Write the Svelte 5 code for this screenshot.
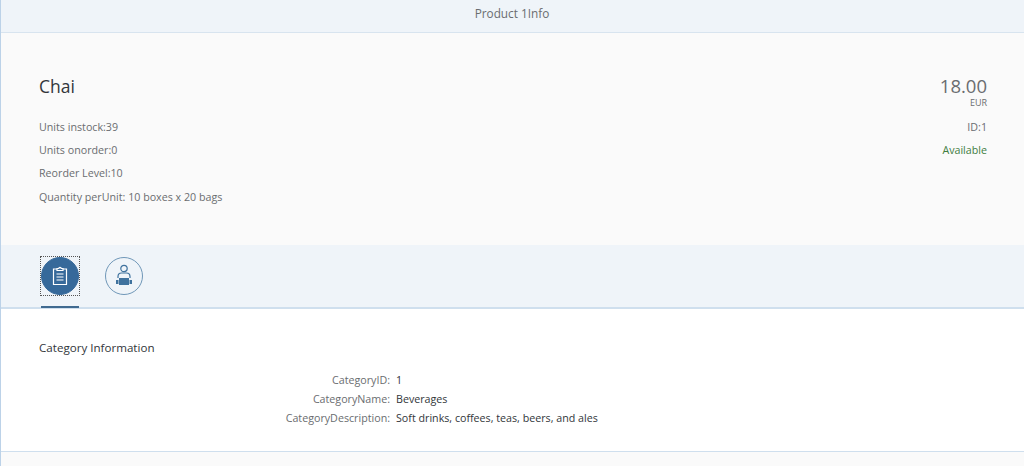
<script>
  const stats = ['Units instock:39', 'Units onorder:0', 'Reorder Level:10', 'Quantity perUnit: 10 boxes x 20 bags']
  const fields = [
    ['CategoryID:', '1'],
    ['CategoryName:', 'Beverages'],
    ['CategoryDescription:', 'Soft drinks, coffees, teas, beers, and ales']
  ]
</script>

<div class="page">
  <header class="title">Product 1Info</header>

  <section class="object">
    <div class="object__left">
      <h1>Chai</h1>
      {#each stats as s}
        <div class="attr">{s}</div>
      {/each}
    </div>
    <div class="object__right">
      <div class="price">18.00</div>
      <div class="unit">EUR</div>
      <div class="attr attr--id">ID:1</div>
      <div class="attr attr--ok">Available</div>
    </div>
  </section>

  <nav class="tabs">
    <div class="tab tab--active">
      <div class="focus">
        <span class="circle circle--filled">
          <svg width="16" height="20" viewBox="0 0 16 20" fill="none" stroke="#fff" stroke-width="1.2">
            <path d="M5 3H1.500v15.500h13V3H11" />
            <path d="M5 4.500V2.500h1.800a1.200 1.200 0 0 1 2.400 0H11v2z" />
            <path d="M4.500 8h7M4.500 11h7M4.500 14h7" />
          </svg>
        </span>
      </div>
    </div>
    <div class="tab">
      <span class="circle">
        <svg width="22" height="24" viewBox="0 0 22 24" fill="none" stroke="#3f729e" stroke-width="1.2">
          <circle cx="11" cy="4.500" r="3.200" />
          <path d="M5 14v-1.500c0-2 1.500-3.500 3.500-3.500h5c2 0 3.500 1.500 3.500 3.500V14" />
          <rect x="6" y="14" width="10" height="7" fill="#3f729e" stroke="none" />
          <path d="M3 16h2.500v4H3zM16.500 16H19v4h-2.500z" fill="#3f729e" stroke="none" />
        </svg>
      </span>
    </div>
  </nav>

  <section class="content">
    <h2>Category Information</h2>
    <dl class="form">
      {#each fields as [k, v]}
        <dt>{k}</dt>
        <dd>{v}</dd>
      {/each}
    </dl>
  </section>
  <div class="foot"></div>
</div>

<style>
  :global(body) {
    margin: 0;
    background: #fff;
  }

  .page {
    height: 466px;
    overflow: hidden;
    font-family: "Open Sans", "Liberation Sans", sans-serif;
    font-size: 10.700px;
    color: #6a6d70;
    background: #fafafa;
    border-left: 1px solid #bcd2e8;
    box-sizing: border-box;
  }

  .title {
    height: 33px;
    line-height: 27px;
    text-align: center;
    font-size: 11.800px;
    color: #6a6d70;
    background: #eff4f9;
    border-bottom: 1px solid #d8e4ef;
    margin-left: -1px;
    box-sizing: border-box;
  }

  .object {
    display: flex;
    justify-content: space-between;
    height: 212px;
    padding: 42px 37px 0 38px;
    box-sizing: border-box;
  }

  h1 {
    margin: 0 0 22px;
    font-size: 17.500px;
    font-weight: 400;
    line-height: 22px;
    color: #32363a;
  }

  .attr {
    height: 23.200px;
    line-height: 16px;
  }

  .object__right {
    text-align: right;
  }

  .price {
    font-size: 18.500px;
    line-height: 20px;
    margin-top: 1px;
  }

  .unit {
    font-size: 9px;
    line-height: 11px;
    margin-top: 1px;
    margin-bottom: 11px;
  }

  .attr--ok {
    color: #3f7d3f;
  }

  .tabs {
    display: flex;
    gap: 26px;
    height: 64px;
    padding-left: 40px;
    background: #eff4f9;
    border-bottom: 2px solid #cfdfee;
    box-sizing: border-box;
  }

  .tab {
    padding-top: 12px;
    height: 63px;
    box-sizing: border-box;
  }

  .tab--active {
    border-bottom: 2px solid #3f6a90;
  }

  .focus {
    outline: 1px dotted #555;
    width: 38px;
    height: 38px;
  }

  .circle {
    display: flex;
    align-items: center;
    justify-content: center;
    width: 38px;
    height: 38px;
    border-radius: 50%;
    border: 1px solid #6f97b8;
    box-sizing: border-box;
  }

  .circle--filled {
    background: #36699a;
    border-color: #36699a;
  }

  .content {
    height: 143px;
    padding: 31px 38px 0;
    background: #fff;
    border-bottom: 1px solid #cfdfee;
    box-sizing: border-box;
  }

  h2 {
    margin: 0 0 15px;
    font-size: 11.600px;
    font-weight: 400;
    line-height: 16px;
    color: #32363a;
  }

  .form {
    display: grid;
    grid-template-columns: 351px 1fr;
    column-gap: 6px;
    margin: 0;
    line-height: 19px;
  }

  dt {
    text-align: right;
  }

  dd {
    margin: 0;
    color: #32363a;
  }
</style>
